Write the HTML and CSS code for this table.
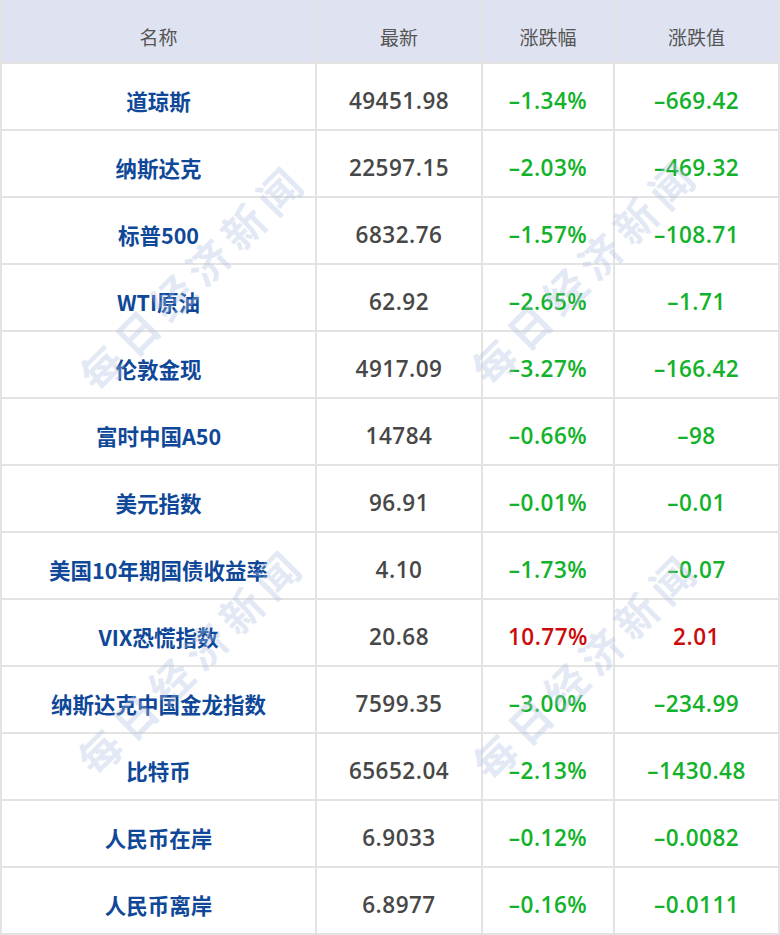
FILE: index.html
```html
<!DOCTYPE html>
<html lang="zh-CN">
<head>
<meta charset="utf-8">
<title>行情</title>
<link rel="stylesheet" href="styles.css">
</head>
<body>
<div class="wrap">
  <div class="table">
    <div class="th">名称</div><div class="th">最新</div><div class="th">涨跌幅</div><div class="th">涨跌值</div>

    <div class="td name">道琼斯</div><div class="td num">49451.98</div><div class="td down">–1.34%</div><div class="td down">–669.42</div>
    <div class="td name">纳斯达克</div><div class="td num">22597.15</div><div class="td down">–2.03%</div><div class="td down">–469.32</div>
    <div class="td name">标普500</div><div class="td num">6832.76</div><div class="td down">–1.57%</div><div class="td down">–108.71</div>
    <div class="td name">WTI原油</div><div class="td num">62.92</div><div class="td down">–2.65%</div><div class="td down">–1.71</div>
    <div class="td name">伦敦金现</div><div class="td num">4917.09</div><div class="td down">–3.27%</div><div class="td down">–166.42</div>
    <div class="td name">富时中国A50</div><div class="td num">14784</div><div class="td down">–0.66%</div><div class="td down">–98</div>
    <div class="td name">美元指数</div><div class="td num">96.91</div><div class="td down">–0.01%</div><div class="td down">–0.01</div>
    <div class="td name">美国10年期国债收益率</div><div class="td num">4.10</div><div class="td down">–1.73%</div><div class="td down">–0.07</div>
    <div class="td name">VIX恐慌指数</div><div class="td num">20.68</div><div class="td up">10.77%</div><div class="td up">2.01</div>
    <div class="td name">纳斯达克中国金龙指数</div><div class="td num">7599.35</div><div class="td down">–3.00%</div><div class="td down">–234.99</div>
    <div class="td name">比特币</div><div class="td num">65652.04</div><div class="td down">–2.13%</div><div class="td down">–1430.48</div>
    <div class="td name">人民币在岸</div><div class="td num">6.9033</div><div class="td down">–0.12%</div><div class="td down">–0.0082</div>
    <div class="td name">人民币离岸</div><div class="td num">6.8977</div><div class="td down">–0.16%</div><div class="td down">–0.0111</div>
  </div>
  <div class="wm wm1">每日经济新闻</div>
  <div class="wm wm2">每日经济新闻</div>
  <div class="wm wm3">每日经济新闻</div>
  <div class="wm wm4">每日经济新闻</div>
</div>
</body>
</html>
```
FILE: styles.css
```css
html, body {
  margin: 0;
  padding: 0;
  background: #ffffff;
}
body {
  font-family: "Open Sans", "Noto Sans CJK SC", sans-serif;
}
.wrap {
  position: relative;
  width: 780px;
  height: 935px;
  overflow: hidden;
}
.table {
  display: grid;
  grid-template-columns: 313px 164px 130px 163px;
  grid-template-rows: 62px;
  grid-auto-rows: 65px;
  gap: 2px;
  padding: 0 2px 2px 2px;
  background: #e3e3e3;
  width: 780px;
  box-sizing: border-box;
}
.th, .td {
  display: flex;
  align-items: center;
  justify-content: center;
  padding-top: 8px;
  box-sizing: border-box;
  white-space: nowrap;
}
.th {
  background: #dfe3f1;
  color: #555555;
  font-family: "Noto Sans CJK SC", sans-serif;
  font-size: 19px;
  font-weight: 400;
  padding-top: 10px;
}
.td {
  background: #ffffff;
  font-size: 22.5px;
  font-weight: 600;
  letter-spacing: 0.5px;
}
.name {
  color: #0f4898;
  font-family: "Noto Sans CJK SC", sans-serif;
  font-weight: 700;
  font-size: 21.5px;
  letter-spacing: 0;
}
.num { color: #474747; }
.down { color: #12b22a; }
.up { color: #cc0a0a; }
.wm {
  position: absolute;
  font-family: "Noto Sans CJK SC", sans-serif;
  font-weight: 700;
  font-size: 42px;
  letter-spacing: 8px;
  color: rgba(175, 192, 224, 0.36);
  white-space: nowrap;
  transform: translate(-50%, -50%) rotate(-45deg);
  pointer-events: none;
  line-height: 1;
}
.wm1 { left: 192px; top: 276px; }
.wm2 { left: 584px; top: 270px; }
.wm3 { left: 190px; top: 660px; }
.wm4 { left: 585px; top: 665px; }
```
